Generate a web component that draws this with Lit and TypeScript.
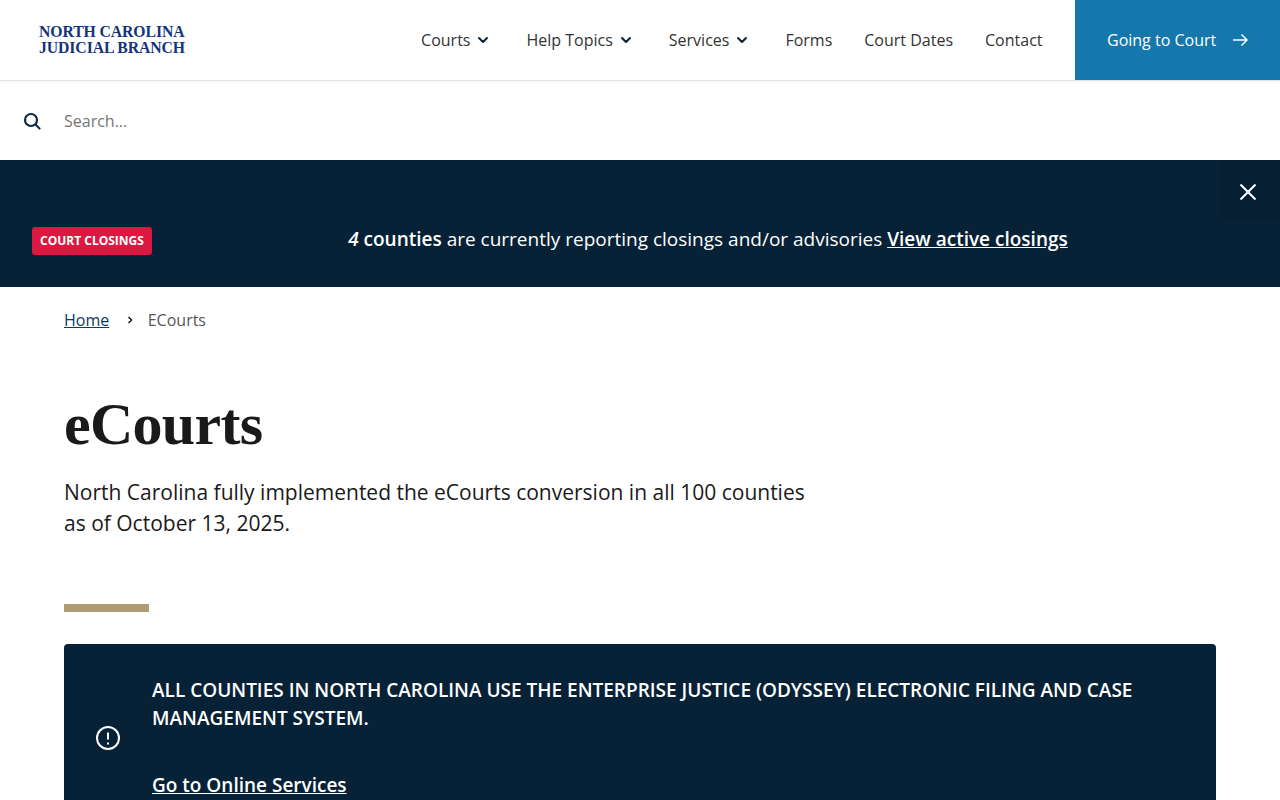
import { LitElement, html, css } from "lit";
import { customElement } from "lit/decorators.js";

@customElement("app-root")
export class AppRoot extends LitElement {
  static styles = css`
    :host { display: block; font-family: "Open Sans", sans-serif; color: #1a1a1a; background: #fff; height: 800px; overflow: hidden; }
    a { color: inherit; }
    .header { display: flex; align-items: stretch; height: 80px; border-bottom: 1px solid #e4e4e4; box-shadow: 0 1px 3px rgba(0,0,0,.05); position: relative; }
    .logo { margin-left: 39px; align-self: center; font-family: "Liberation Serif", serif; font-weight: 700; font-size: 15.75px; line-height: 16px; color: #14347a; letter-spacing: -.1px; }
    .nav { margin-left: auto; display: flex; align-items: center; gap: 32px; padding-right: 32.5px; font-size: 16px; color: #333; }
    .nav-item { display: flex; align-items: center; gap: 7px; line-height: 24px; }
    .nav-item svg { width: 12px; height: 12px; margin-right: 5px; }
    .cta { width: 205px; box-sizing: border-box; background: #1478ac; color: #fff; display: flex; align-items: center; padding-left: 32px; gap: 16px; font-size: 16px; }
    .search { height: 79px; display: flex; align-items: center; gap: 23px; padding-left: 23px; font-size: 16px; color: #757575; }
    .banner { background: #072236; position: relative; height: 127px; box-sizing: border-box; padding: 65px 32px 31px; display: flex; align-items: center; gap: 16px; color: #fff; }
    .close { position: absolute; right: 0; top: 0; width: 62px; height: 62px; background: #061f32; display: flex; align-items: center; justify-content: center; padding-right: 2px; padding-top: 2px; box-sizing: border-box; }
    .badge { background: #dd1840; color: #fff; font-size: 12px; font-weight: 700; border-radius: 3px; height: 28px; line-height: 28px; padding: 0 8px; white-space: nowrap; }
    .banner-text { flex: 1; text-align: center; font-size: 19px; line-height: 29px; padding-bottom: 2px; }
    .banner-text a, .banner-text b { font-weight: 600; }
    .crumbs { display: flex; align-items: center; padding: 21px 64px 0; height: 24px; font-size: 16px; color: #555; line-height: 24px; }
    .crumbs a { color: #0b3a6b; }
    .crumbs svg { width: 8px; height: 8px; margin: 0 13.5px 0 17px; }
    h1 { margin: 0; padding: 57px 64px 0; font-family: "Liberation Serif", serif; font-weight: 700; font-size: 60px; line-height: 70px; letter-spacing: -0.7px; color: #1a1a1a; }
    .lede { margin: 0; padding: 18px 64px 0; font-size: 21px; line-height: 31px; max-width: 760px; }
    .rule { width: 85px; height: 8px; margin: 65px 0 0 64px; background: #b09a74; }
    .alert { margin: 32px 64px 0; background: #072236; color: #fff; border-radius: 4px; padding: 32px 64px 31px 32px; display: flex; align-items: center; gap: 32px; font-size: 19px; font-weight: 600; line-height: 28px; }
    .alert svg { width: 24px; height: 24px; flex: none; }
    .alert p { margin: 0 0 39px; }
    .alert a { font-weight: 600; }
  `;

  chevron() {
    return html`<svg viewBox="0 0 12 12" fill="none" stroke="#072236" stroke-width="2" stroke-linecap="round" stroke-linejoin="round"><path d="M2 4l4 4 4-4"/></svg>`;
  }

  render() {
    return html`
      <div class="header">
        <div class="logo">NORTH CAROLINA<br />JUDICIAL BRANCH</div>
        <div class="nav">
          <div class="nav-item">Courts ${this.chevron()}</div>
          <div class="nav-item">Help Topics ${this.chevron()}</div>
          <div class="nav-item">Services ${this.chevron()}</div>
          <div class="nav-item">Forms</div>
          <div class="nav-item">Court Dates</div>
          <div class="nav-item">Contact</div>
        </div>
        <div class="cta">Going to Court
          <svg width="16" height="14" viewBox="0 0 16 14" fill="none" stroke="#fff" stroke-width="1.5"><path d="M1 7h14M9.500 1.500L15 7l-5.500 5.500"/></svg>
        </div>
      </div>
      <div class="search">
        <svg width="18" height="18" viewBox="0 0 18 18" fill="none" stroke="#0c2d48" stroke-width="2.200"><circle cx="8" cy="8" r="6"/><path d="M12.500 12.500L16.500 16.500" stroke-linecap="round"/></svg>
        <span>Search...</span>
      </div>
      <div class="banner">
        <div class="close">
          <svg width="18" height="18" viewBox="0 0 18 18" fill="none" stroke="#fff" stroke-width="2"><path d="M1.500 1.500l15 15M16.500 1.500l-15 15"/></svg>
        </div>
        <span class="badge">COURT CLOSINGS</span>
        <div class="banner-text"><b><i>4</i> counties</b> are currently reporting closings and/or advisories <a href="#">View active closings</a></div>
      </div>
      <div class="crumbs">
        <a href="#">Home</a>
        <svg viewBox="0 0 8 8" fill="none" stroke="#072236" stroke-width="1.500"><path d="M2.500 1l3 3-3 3"/></svg>
        <span>ECourts</span>
      </div>
      <h1>eCourts</h1>
      <p class="lede">North Carolina fully implemented the eCourts conversion in all 100 counties as of October 13, 2025.</p>
      <div class="rule"></div>
      <div class="alert">
        <svg viewBox="0 0 24 24" fill="none" stroke="#fff" stroke-width="2"><circle cx="12" cy="12" r="11"/><path d="M12 6.500v7M12 16.500v2" /></svg>
        <div>
          <p>ALL COUNTIES IN NORTH CAROLINA USE THE ENTERPRISE JUSTICE (ODYSSEY) ELECTRONIC FILING AND CASE MANAGEMENT SYSTEM.</p>
          <a href="#">Go to Online Services</a>
        </div>
      </div>
    `;
  }
}
